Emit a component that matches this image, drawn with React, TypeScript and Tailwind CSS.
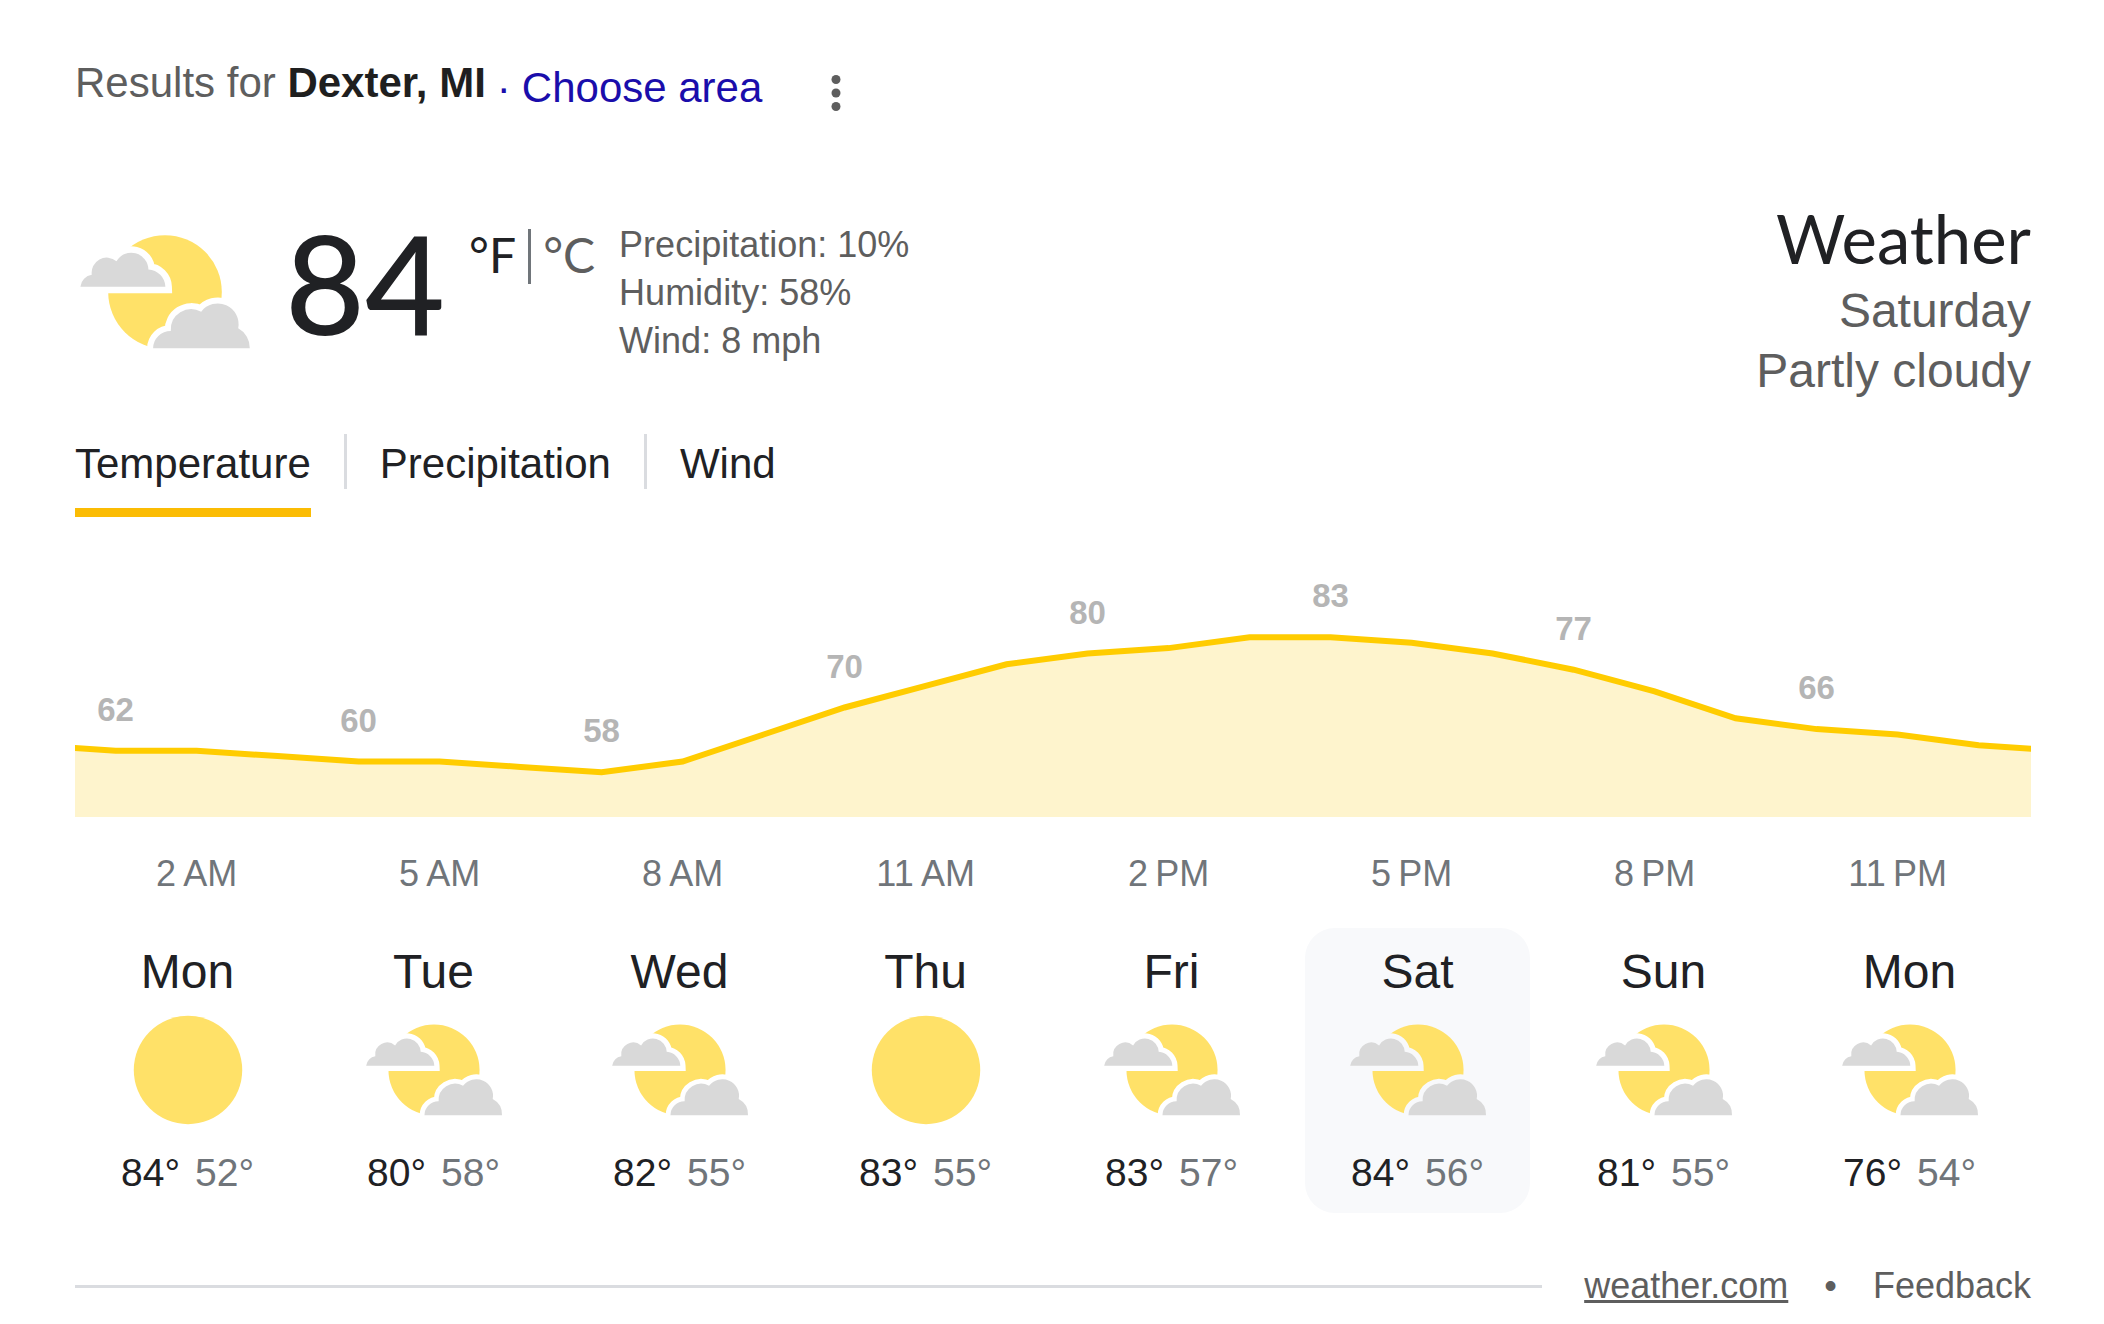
const hourly = [
  63, 62, 62, 61, 60, 60, 59, 58, 60, 65, 70, 74, 78, 80, 81, 83, 83, 82, 80, 77, 73, 68, 66, 65, 63, 62,
];

const days = [
  { name: "Mon", icon: "sunny", high: 84, low: 52 },
  { name: "Tue", icon: "cloudy", high: 80, low: 58 },
  { name: "Wed", icon: "cloudy", high: 82, low: 55 },
  { name: "Thu", icon: "sunny", high: 83, low: 55 },
  { name: "Fri", icon: "cloudy", high: 83, low: 57 },
  { name: "Sat", icon: "cloudy", high: 84, low: 56, selected: true },
  { name: "Sun", icon: "cloudy", high: 81, low: 55 },
  { name: "Mon", icon: "cloudy", high: 76, low: 54 },
];

const BACK_CLOUD =
  "M11.4 90.7 A13.5 13.5 0 0 1 22.8 78.8 A15 15 0 0 1 47.5 65.3 A17.1 17.1 0 0 1 79.4 73.4 A18 18 0 0 1 96.4 90.7 Z";
const FRONT_CLOUD =
  "M84.1 152.3 A17.5 17.5 0 0 1 101.8 135 A20.5 20.5 0 0 1 132.2 115.7 A20.8 20.8 0 0 1 169.2 132.3 A22 22 0 0 1 180.8 152.3 Z";

const PartlyCloudy = ({ id, className }: { id: string; className: string }) => (
  <svg viewBox="0 0 192 192" className={className} role="img" aria-label="Partly cloudy">
    <mask id={id}>
      <rect width="192" height="192" fill="white" />
      <path d={BACK_CLOUD} fill="black" stroke="black" strokeWidth="13" />
      <path d={FRONT_CLOUD} fill="black" stroke="black" strokeWidth="12" />
    </mask>
    <circle cx="96" cy="96" r="56.8" fill="#ffe168" mask={`url(#${id})`} />
    <path d={BACK_CLOUD} fill="#d9d9d9" />
    <path d={FRONT_CLOUD} fill="#d9d9d9" />
  </svg>
);

const Sunny = ({ className }: { className: string }) => (
  <svg viewBox="0 0 192 192" className={className} role="img" aria-label="Sunny">
    <circle cx="96" cy="96" r="67.6" fill="#ffe168" />
  </svg>
);

const formatHour = (hour: number) => `${hour % 12 || 12}\u202f${hour < 12 ? "AM" : "PM"}`;

const Chart = () => {
  const x = (hour: number) => 40.6 + 81 * (hour - 1);
  const y = (value: number) => 190.7 - (value - 62) * 5.4;
  const line = hourly.map((value, hour) => `${x(hour)},${y(value)}`).join(" ");

  return (
    <svg viewBox="0 0 1956 340" className="mt-[43px] block w-full">
      <polygon points={`${x(0)},257 ${line} ${x(25)},257`} fill="#fef4cd" />
      <polyline points={line} fill="none" stroke="#fc0" strokeWidth="6" />
      {hourly.map((value, hour) =>
        hour % 3 === 1 && hour < 24 ? (
          <text key={hour} x={x(hour)} y={y(value) - 30} textAnchor="middle" className="fill-[#b5b5b5] text-[33px] font-bold">
            {value}
          </text>
        ) : null
      )}
      {hourly.map((_, hour) =>
        hour % 3 === 2 ? (
          <text key={hour} x={x(hour)} y={326} textAnchor="middle" className="fill-[#70757a] text-[36px]">
            {formatHour(hour)}
          </text>
        ) : null
      )}
    </svg>
  );
};

export default function App() {
  return (
    <main className="bg-white pt-14 pr-[73px] pb-4 pl-[75px] font-['Liberation_Sans',Arial,sans-serif] text-[#202124]">
      <header className="flex items-start text-[42px] leading-[54px]">
        <p className="text-[#5e5e5e]">
          Results for <b className="text-[#1f1f1f]">Dexter, MI</b>
        </p>
        <p className="leading-[64px] text-[#1a0dab]">
          <span className="mx-[11px]">·</span>
          <a href="#area">Choose area</a>
        </p>
        <button aria-label="More options" className="ml-14 flex h-[74px] w-9 items-center justify-center">
          <svg viewBox="0 0 10 38" className="h-[38px] w-[10px]" fill="#5e5e5e">
            <circle cx="5" cy="5.5" r="4.5" />
            <circle cx="5" cy="19" r="4.5" />
            <circle cx="5" cy="32.5" r="4.5" />
          </svg>
        </button>
      </header>

      <section className="mt-[66px] flex items-start">
        <PartlyCloudy id="now" className="-ml-1.5 size-[192px]" />
        <div className="ml-6 font-['Lato',sans-serif] text-[138px] leading-[172px] font-medium">84</div>
        <div className="mt-[33px] ml-6 flex items-start font-['Lato',sans-serif] text-[48px] leading-[52px]">
          <button>°F</button>
          <span className="mx-3 h-[55px] w-[3px] bg-[#70757a]" />
          <button className="text-[#5e5e5e]">°C</button>
        </div>
        <div className="mt-[25px] ml-6 text-[36px] leading-[48px] text-[#5e5e5e]">
          <p>Precipitation: 10%</p>
          <p>Humidity: 58%</p>
          <p>Wind: 8 mph</p>
        </div>
        <div className="ml-auto text-right text-[48px] leading-[60px] text-[#5e5e5e]">
          <h1 className="font-['Lato',sans-serif] text-[67px] leading-[85px] text-[#202124]">Weather</h1>
          <p>Saturday</p>
          <p>Partly cloudy</p>
        </div>
      </section>

      <nav className="mt-[33px] flex items-start text-[42px] leading-[60px]">
        <button className="border-b-9 border-[#fbbc04] pb-3.5">Temperature</button>
        <span className="mx-[33px] h-[55px] w-[3px] bg-[#dadce0]" />
        <button>Precipitation</button>
        <span className="mx-[33px] h-[55px] w-[3px] bg-[#dadce0]" />
        <button>Wind</button>
      </nav>

      <Chart />

      <ul className="mt-7 flex gap-[21px] pr-[9px]">
        {days.map((day, i) => (
          <li key={i} className="flex-1">
            <button className={`flex w-full flex-col items-center rounded-[30px] pt-[15px] pb-4 ${day.selected ? "bg-[#f8f9fb]" : ""}`}>
              <span className="text-[48px] leading-[58px]">{day.name}</span>
              {day.icon === "sunny" ? (
                <Sunny className="-my-2 size-[154px]" />
              ) : (
                <PartlyCloudy id={`day-${i}`} className="-my-2 size-[154px]" />
              )}
              <span className="mt-2.5 flex gap-[15px] text-[39px] leading-[48px]">
                <span>{day.high}°</span>
                <span className="text-[#70757a]">{day.low}°</span>
              </span>
            </button>
          </li>
        ))}
      </ul>

      <footer className="mt-12 flex items-center text-[36px] leading-[50px] text-[#5e5e5e]">
        <span className="mr-[42px] h-[3px] flex-1 bg-[#dadce0]" />
        <a href="#source" className="underline">
          weather.com
        </a>
        <span className="mx-9">•</span>
        <a href="#feedback">Feedback</a>
      </footer>
    </main>
  );
}
